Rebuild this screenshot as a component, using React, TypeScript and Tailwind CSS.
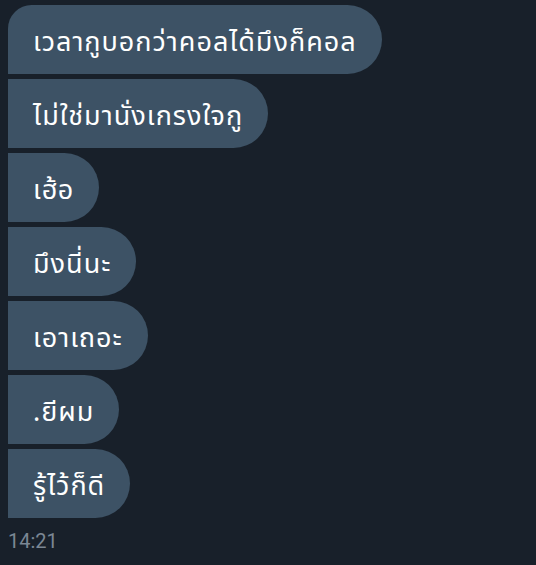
import React from "react";

const messages = [
  "เวลากูบอกว่าคอลได้มึงก็คอล",
  "ไม่ใช่มานั่งเกรงใจกู",
  "เฮ้อ",
  "มึงนี่นะ",
  "เอาเถอะ",
  ".ยีผม",
  "รู้ไว้ก็ดี",
];

export default function App() {
  return (
    <div className="w-[536px] h-[565px] bg-[#18202a] overflow-hidden pl-[8px] pt-[5px] flex flex-col">
      <div className="flex flex-col items-start gap-[5px]">
        {messages.map((m, i) => (
          <div
            key={i}
            className={`h-[69px] bg-[#3d5265] text-white flex items-center pl-[25px] pr-[25px] rounded-r-[35px] ${
              i === 0 ? "rounded-tl-[24px]" : ""
            }`}
            style={{ fontFamily: '"Noto Sans Thai", "Noto Sans", sans-serif' }}
          >
            <span className="text-[27px] tracking-[1px] leading-none whitespace-nowrap pt-[6px]">{m}</span>
          </div>
        ))}
      </div>
      <div
        className="mt-[13px] text-[20px] leading-none text-[#7b8794]"
        style={{ fontFamily: "Roboto, sans-serif" }}
      >
        14:21
      </div>
    </div>
  );
}
